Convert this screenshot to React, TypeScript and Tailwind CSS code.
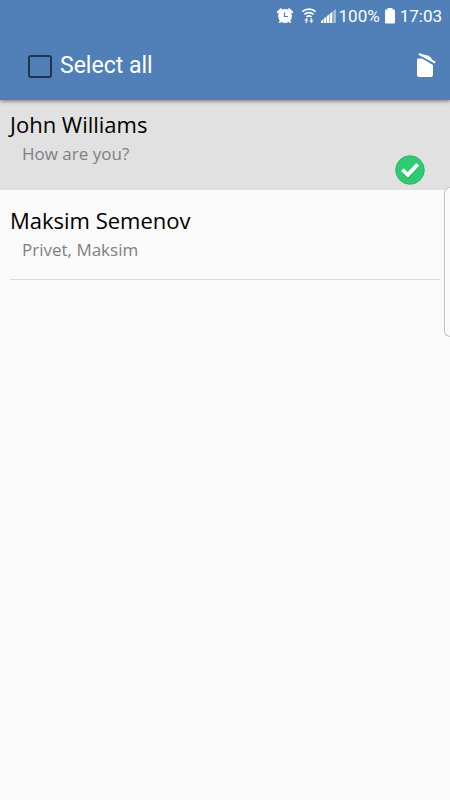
import { useState } from 'react';

interface Chat {
  id: number;
  name: string;
  message: string;
}

const chats: Chat[] = [
  { id: 1, name: 'John Williams', message: 'How are you?' },
  { id: 2, name: 'Maksim Semenov', message: 'Privet, Maksim' },
];

const StatusBar = () => (
  <div className="flex h-8 items-center justify-end pr-2 text-[17px] leading-8 text-white">
    <svg className="mr-2 h-4 w-4" viewBox="0 0 16 16" fill="none">
      <circle cx="8" cy="8" r="6.9" fill="#fff" />
      <path d="M.8 4.2 4 1.2M15.2 4.2 12 1.2" stroke="#fff" strokeWidth="2" strokeLinecap="round" />
      <path d="M3.6 13l-1.2 1.8M12.4 13l1.2 1.8" stroke="#fff" strokeWidth="1.6" />
      <path d="M7.5 4.4v4.1H11" stroke="#5180b8" strokeWidth="1.2" />
    </svg>
    <svg className="mr-1 h-4 w-4" viewBox="0 0 16 16" fill="none" stroke="#fff" strokeWidth="1.7">
      <path d="M1.4 3.6C5 .2 11 .2 14.6 3.6M3.4 6.3C6 4 10 4 12.6 6.3M5.5 9c1.4-1.4 3.6-1.4 5 0" />
      <path d="M4.6 15v-2.4H3.2l2.2-2.8 2.2 2.8H6.2V15zM9.6 10v2.4H8.2l2.2 2.8 2.2-2.8h-1.4V10z" fill="#fff" stroke="none" opacity="0.8" />
    </svg>
    <svg className="mr-0.5 h-4 w-4" viewBox="0 0 16 16" fill="#fff">
      <path d="M0 15v-2l2.4-2v4zM3 15v-4.4l2.4-2V15zM6 15V8l2.4-2v9z" />
      <path d="M9 15V5.6l2.4-2V15z" />
      <path d="M12.4 15V3l2.4-2v14z" opacity="0.55" />
    </svg>
    <span className="mr-1">100%</span>
    <svg className="mr-1 h-4 w-3" viewBox="0 0 12 16" fill="#fff">
      <path d="M3.5 0h5v1.6H10q1 0 1 1v12q0 1-1 1H2q-1 0-1-1v-12q0-1 1-1h1.5z" />
    </svg>
    <span>17:03</span>
  </div>
);

const TrashIcon = () => (
  <svg className="h-7 w-6" viewBox="0 0 24 28" fill="#fff">
    <path d="M3 7.6q0-1 1-1h4L19 13v10q0 2-2 2H5q-2 0-2-2z" />
    <path d="M5.4 1 10 2.8l4 .6 3 2 .8 2 4 2.4-1 1.8L4.4 2.8z" />
  </svg>
);

const CheckBadge = () => (
  <svg className="h-8 w-8" viewBox="0 0 32 32" fill="none">
    <circle cx="16" cy="16" r="14.3" fill="#2ecc71" stroke="#27ae60" strokeWidth="0.8" />
    <path d="m7 18 2.8-2.6 3.8 4L22.4 10l2.8 2.6L13.8 25z" fill="#27a65c" />
    <path d="m7 17 2.8-2.8 3.8 4L22.4 9l2.8 2.8-11.4 12z" fill="#fff" />
  </svg>
);

const App = () => {
  const [selected, setSelected] = useState<number[]>([1]);
  const [removed, setRemoved] = useState<number[]>([]);

  const visible = chats.filter((chat) => !removed.includes(chat.id));
  const allSelected = visible.length > 0 && visible.every((chat) => selected.includes(chat.id));

  const toggle = (id: number) => {
    setSelected((prev) => (prev.includes(id) ? prev.filter((item) => item !== id) : [...prev, id]));
  };

  const handleSelectAll = () => {
    setSelected(allSelected ? [] : visible.map((chat) => chat.id));
  };

  const handleDelete = () => {
    setRemoved((prev) => [...prev, ...selected]);
    setSelected([]);
  };

  return (
    <div className="relative min-h-screen bg-[#fafafa] font-['Roboto',sans-serif]">
      <header className="relative bg-[#5180b8] shadow-[0_1px_4px_rgba(0,0,0,0.5)]">
        <StatusBar />
        <div className="flex h-[68px] items-center justify-between pr-3 pl-7">
          <label className="flex items-center gap-2 text-[23px] leading-8 text-white">
            <input
              type="checkbox"
              checked={allSelected}
              onChange={handleSelectAll}
              className="h-[23px] w-6 appearance-none rounded-[3px] border-2 border-[#20354c] checked:bg-[#20354c]"
            />
            Select all
          </label>
          <button type="button" aria-label="Delete" onClick={handleDelete}>
            <TrashIcon />
          </button>
        </div>
      </header>

      {/* chat list */}
      <ul className="font-['Open_Sans','Noto_Sans',sans-serif]">
        {visible.map((chat) => {
          const isSelected = selected.includes(chat.id);
          return (
            <li key={chat.id}>
              <button
                type="button"
                aria-pressed={isSelected}
                onClick={() => toggle(chat.id)}
                className={`flex h-[90px] w-full px-2.5 text-left ${isSelected ? 'bg-[#e1e1e1]' : 'pt-1.5'}`}
              >
                <span className={`flex flex-1 justify-between ${isSelected ? '' : 'border-b border-[#d9d9d9]'}`}>
                  <span className="flex flex-col pt-2">
                    <span className="text-[22px] leading-8 text-black">{chat.name}</span>
                    <span className="pl-3 text-[17px] leading-7 text-[#808080]">{chat.message}</span>
                  </span>
                  {isSelected && (
                    <span className="self-end pr-3.5 pb-1">
                      <CheckBadge />
                    </span>
                  )}
                </span>
              </button>
            </li>
          );
        })}
      </ul>

      {/* edge panel handle */}
      <div className="absolute top-[187px] right-0 h-[150px] w-1.5 rounded-l-md border border-r-0 border-[#c4c4c4] bg-[#fafafa]" />
    </div>
  );
};

export default App;
